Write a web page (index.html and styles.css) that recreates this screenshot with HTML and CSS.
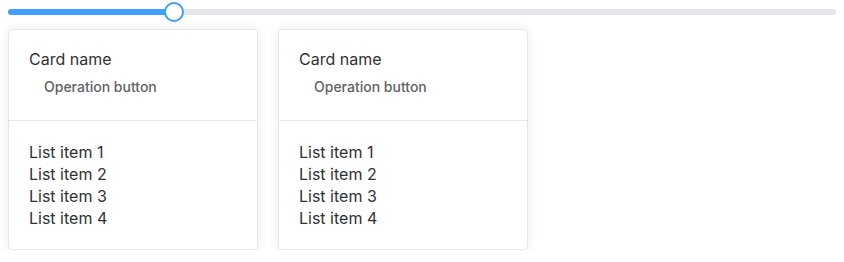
FILE: index.html
```html
<!DOCTYPE html>
<html lang="en">
<head>
    <meta charset="UTF-8">
    <meta name="viewport" content="width=device-width, initial-scale=1.0">
    <title>Cards</title>
    <link rel="stylesheet" href="styles.css">
</head>
<body>
    <div class="slider">
        <div class="runway">
            <div class="bar" style="width: 20%"></div>
            <div class="handle" style="left: 20%"></div>
        </div>
    </div>

    <div class="cards">
        <div class="card">
            <div class="card-header">
                <div class="card-title">Card name</div>
                <button class="text-btn">Operation button</button>
            </div>
            <div class="card-body">
                <div class="item">List item 1</div>
                <div class="item">List item 2</div>
                <div class="item">List item 3</div>
                <div class="item">List item 4</div>
            </div>
        </div>
        <div class="card">
            <div class="card-header">
                <div class="card-title">Card name</div>
                <button class="text-btn">Operation button</button>
            </div>
            <div class="card-body">
                <div class="item">List item 1</div>
                <div class="item">List item 2</div>
                <div class="item">List item 3</div>
                <div class="item">List item 4</div>
            </div>
        </div>
    </div>
</body>
</html>
```

FILE: styles.css
```css
body {
    font-family: Inter, "Noto Sans", sans-serif;
    margin: 0;
    padding: 0 8px;
    background: #fff;
    color: #303133;
    font-size: 16px;
}
.slider {
    height: 24px;
    display: flex;
    align-items: center;
}
.runway {
    position: relative;
    width: 100%;
    height: 6px;
    background: #e4e7ed;
    border-radius: 3px;
}
.bar {
    height: 6px;
    background: #409eff;
    border-radius: 3px 0 0 3px;
}
.handle {
    position: absolute;
    top: 50%;
    width: 20px;
    height: 20px;
    box-sizing: border-box;
    border: 2px solid #409eff;
    border-radius: 50%;
    background: #fff;
    transform: translate(-50%, -50%);
}
.cards {
    display: flex;
    gap: 20px;
    margin-top: 5px;
}
.card {
    width: 250px;
    box-sizing: border-box;
    border: 1px solid #e4e7ed;
    border-radius: 4px;
    background: #fff;
    box-shadow: 0 0 12px rgba(0, 0, 0, 0.08);
    overflow: hidden;
}
.card-header {
    padding: 18px 20px;
    border-bottom: 1px solid #e4e7ed;
}
.card-title {
    line-height: 22px;
}
.text-btn {
    display: block;
    height: 32px;
    padding: 8px 15px;
    border: none;
    background: none;
    font-family: inherit;
    font-size: 14px;
    font-weight: 500;
    color: #606266;
    cursor: pointer;
}
.card-body {
    padding: 20px;
}
.item {
    line-height: 22px;
}
```
